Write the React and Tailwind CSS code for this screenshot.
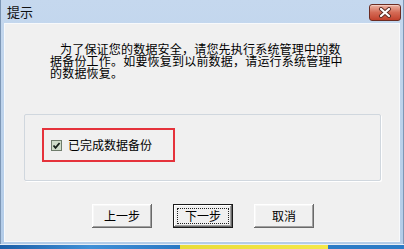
const font = { fontFamily: '"Noto Sans CJK SC", "Noto Sans", sans-serif' };

function ClassicButton({ label, isDefault }) {
  if (isDefault) {
    return (
      <button
        type="button"
        className="flex h-[24px] w-[60px] items-center justify-center border border-[#1a1a1a] bg-[#f0f0f0] p-[3px] shadow-[inset_-1px_-1px_#696969,inset_1px_1px_#ffffff,inset_-2px_-2px_#a0a0a0]"
      >
        <span className="flex h-full w-full items-center justify-center border border-dotted border-[#222] text-[12px] leading-none text-black">
          {label}
        </span>
      </button>
    );
  }
  return (
    <button
      type="button"
      className="flex h-[24px] w-[60px] items-center justify-center bg-[#f0f0f0] text-[12px] leading-none text-black shadow-[inset_-1px_-1px_#696969,inset_1px_1px_#ffffff,inset_-2px_-2px_#a0a0a0,inset_2px_2px_#f7f7f7]"
    >
      {label}
    </button>
  );
}

function CloseButton() {
  return (
    <div className="flex h-[17px] w-[32px] items-center justify-center rounded-[3px] border border-[#6b2c22] bg-gradient-to-b from-[#eab2a3] via-[#d46a55] to-[#c2412c] shadow-[inset_0_1px_0_#f3cbbf]">
      <svg width="14" height="11" viewBox="0 0 14 11">
        <path d="M3 2 L11 9 M11 2 L3 9" stroke="#5a2a22" strokeWidth="4" strokeLinecap="round" />
        <path d="M3 2 L11 9 M11 2 L3 9" stroke="#ffffff" strokeWidth="2.2" strokeLinecap="round" />
      </svg>
    </div>
  );
}

function CheckBox() {
  return (
    <svg width="11" height="11" viewBox="0 0 11 11" className="shrink-0">
      <rect x="0.5" y="0.5" width="10" height="10" fill="#cfdcc9" stroke="#6f7c6c" />
      <path d="M2.5 5.5 L4.5 7.8 L8.6 3" stroke="#16201a" strokeWidth="1.8" fill="none" />
    </svg>
  );
}

export default function App() {
  return (
    <div className="flex h-[249px] w-[404px] flex-col overflow-hidden bg-[#c9dbef]" style={font}>
      <div className="flex h-[244px] flex-col border-x border-[#7d97b6] bg-gradient-to-b from-[#c5d8ee] to-[#b3cce8]">
        <div className="flex h-[23px] items-start justify-between pl-[6px] pr-[2px] pt-[4px]">
          <span className="mt-[1px] text-[13px] leading-[14px] text-[#111]">提示</span>
          <CloseButton />
        </div>
        <div className="mx-[3px] flex h-[219px] flex-col border border-[#f7f9fb] bg-[#f0f0f0]">
          <p className="ml-[45px] mt-[19px] w-[298px] indent-[10px] text-[12px] leading-[12px] tracking-[0.2px] text-black">
            为了保证您的数据安全，请您先执行系统管理中的数据备份工作。如要恢复到以前数据，请运行系统管理中的数据恢复。
          </p>
          <div className="ml-[19px] mt-[35px] h-[67px] w-[357px] rounded-[2px] border border-[#d0d7de] pl-[17px] pt-[13px] shadow-[1px_1px_0_#ffffff]">
            <div className="flex h-[34px] w-[133px] items-center gap-[6px] border-[2.5px] border-[#e5323b] pl-[7px]">
              <CheckBox />
              <span className="text-[12px] leading-none text-black">已完成数据备份</span>
            </div>
          </div>
          <div className="ml-[87px] mt-[23px] flex gap-[21px]">
            <ClassicButton label="上一步" />
            <ClassicButton label="下一步" isDefault />
            <ClassicButton label="取消" />
          </div>
        </div>
      </div>
      <div className="flex h-[5px] border-t border-[#e8eef5]">
        <div className="w-[180px] bg-gradient-to-r from-[#1c5fa8] via-[#3f8fd6] to-[#2a78c4]" />
        <div className="w-[148px] bg-gradient-to-r from-[#e8dc3a] to-[#f4e84a]" />
        <div className="flex-1 bg-[#2b7bc6]" />
      </div>
    </div>
  );
}
